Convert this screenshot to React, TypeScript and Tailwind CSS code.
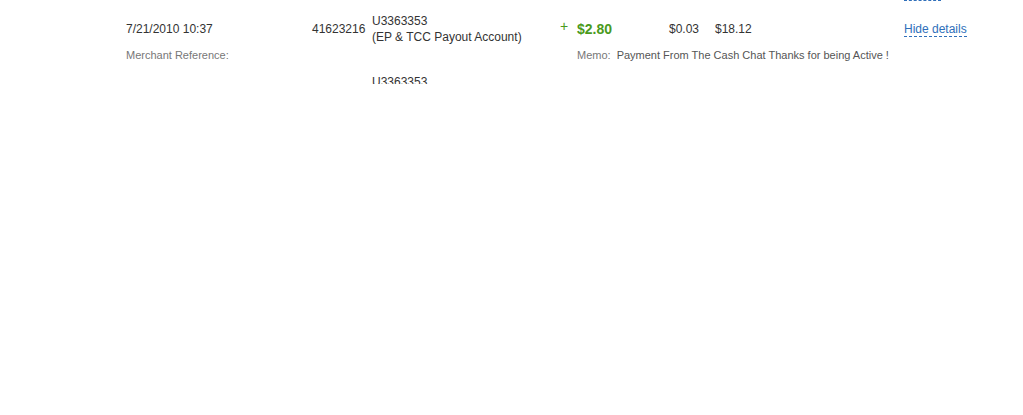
const rows = [
  {
    date: "7/21/2010 10:37",
    batch: "41623216",
    account: "U3363353",
    accountName: "(EP & TCC Payout Account)",
    amount: "$2.80",
    fee: "$0.03",
    balance: "$18.12",
    memo: "Payment From The Cash Chat Thanks for being Active !",
  },
];

const App = () => {
  return (
    <div
      className="w-[1023px] h-[415px] bg-white text-[12px] text-[#333]"
      style={{ fontFamily: '"Liberation Sans", Arial, sans-serif' }}
    >
      <div className="h-[84px] overflow-hidden">
        {/* underline of the previous row's link, cut off at the top */}
        <div className="ml-[904px] w-[37px] h-px border-b border-dashed border-[#2f6fba]" />

        {rows.map((row) => (
          <div key={row.batch} className="pt-[12px]">
            <div className="flex items-center pl-[126px]">
              <div className="w-[186px]">{row.date}</div>
              <div className="w-[52px] text-right mr-[8px]">{row.batch}</div>
              <div className="w-[186px] leading-[16px]">
                <div>{row.account}</div>
                <div>{row.accountName}</div>
              </div>
              <div className="w-[19px] pl-[2px] text-[14px] text-[#4a9a1c] -mt-[6px]">+</div>
              <div className="w-[92px] text-[14px] font-bold text-[#4a9a1c]">{row.amount}</div>
              <div className="w-[46px]">{row.fee}</div>
              <div className="w-[189px]">{row.balance}</div>
              <a className="text-[#2f6fba] border-b border-dashed border-[#2f6fba] leading-[14px]">
                Hide details
              </a>
            </div>

            <div className="flex pl-[126px] mt-[3px] text-[11px] leading-[14px] text-[#777]">
              <div className="w-[451px]">Merchant Reference:</div>
              <div className="flex">
                <span>Memo:</span>
                <span className="ml-[6px] text-[#555]">{row.memo}</span>
              </div>
            </div>

            <div className="pl-[372px] mt-[12px] leading-[16px]">{row.account}</div>
          </div>
        ))}
      </div>
    </div>
  );
};

export default App;
